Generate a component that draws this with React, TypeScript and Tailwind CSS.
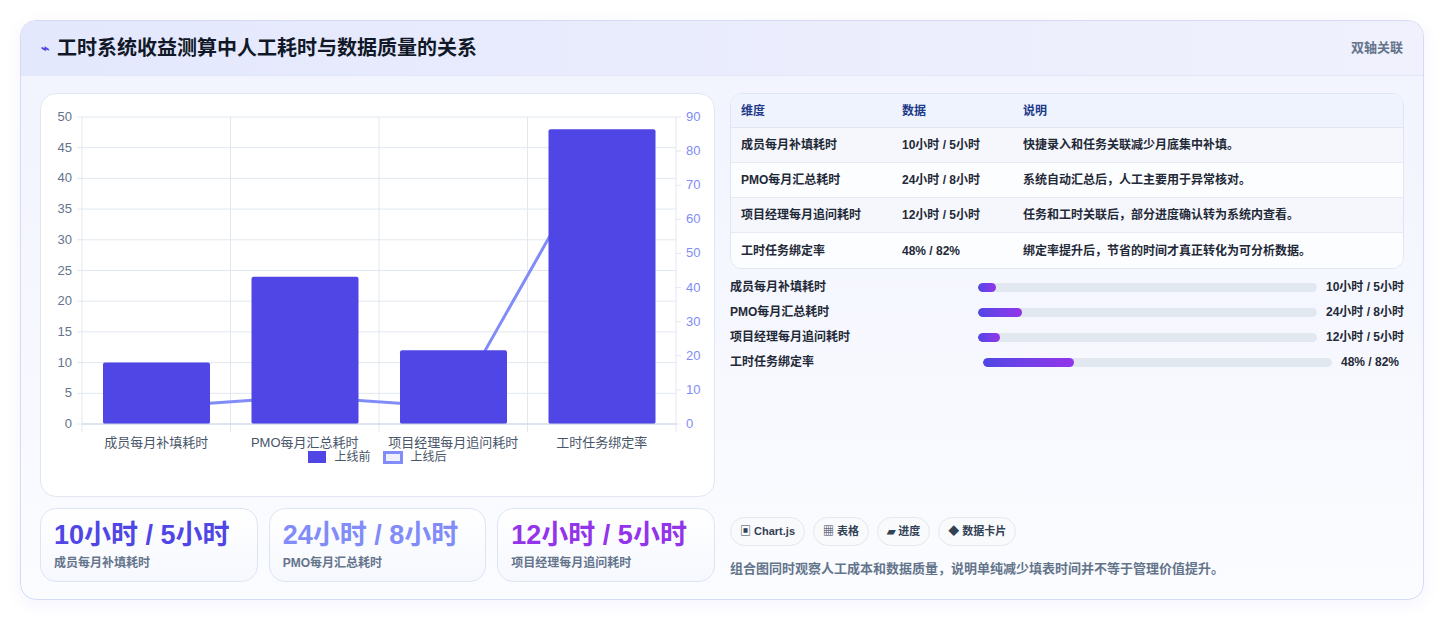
import React from "react";

const cats = ["成员每月补填耗时", "PMO每月汇总耗时", "项目经理每月追问耗时", "工时任务绑定率"];
const before = [10, 24, 12, 48];
const after = [5, 8, 5, 82];

function Chart() {
  const L = 41, R = 635, T = 23, B = 330;
  const cw = (R - L) / 4;
  const yl = (v: number) => B - (v / 50) * (B - T);
  const yr = (v: number) => B - (v / 90) * (B - T);
  const pts = after.map((v, i) => `${L + cw * i + cw / 2},${yr(v)}`).join(" ");
  return (
    <svg width="675" height="355" className="block" style={{ fontFamily: '"Liberation Sans","Noto Sans CJK SC",sans-serif' }}>
      {[0, 5, 10, 15, 20, 25, 30, 35, 40, 45, 50].map((v) => (
        <g key={v}>
          <line x1={L - 5} x2={R} y1={yl(v)} y2={yl(v)} stroke="#e2e8f0" />
          <text x={L - 10} y={yl(v) + 4} fontSize="13" fill="#64748b" textAnchor="end">{v}</text>
        </g>
      ))}
      {[0, 10, 20, 30, 40, 50, 60, 70, 80, 90].map((v) => (
        <g key={v}>
          <line x1={R} x2={R + 5} y1={yr(v)} y2={yr(v)} stroke="#e2e8f0" />
          <text x={R + 10} y={yr(v) + 4} fontSize="13" fill="#818cf8">{v}</text>
        </g>
      ))}
      {[0, 1, 2, 3, 4].map((i) => (
        <line key={i} x1={L + cw * i} x2={L + cw * i} y1={T} y2={B + 8} stroke="#e2e8f0" />
      ))}
      <polyline points={pts} fill="none" stroke="#818cf8" strokeWidth="3" />
      {before.map((v, i) => (
        <rect key={i} x={L + cw * i + 21} y={yl(v)} width={107} height={B - yl(v)} fill="#4f46e5" rx="2" />
      ))}
      <line x1={L} x2={R} y1={B} y2={B} stroke="#cbd5e1" />
      {cats.map((c, i) => (
        <text key={c} x={L + cw * i + cw / 2} y={B + 23} fontSize="13" fill="#475569" textAnchor="middle">{c}</text>
      ))}
    </svg>
  );
}

const rows = [
  ["成员每月补填耗时", "10小时 / 5小时", "快捷录入和任务关联减少月底集中补填。"],
  ["PMO每月汇总耗时", "24小时 / 8小时", "系统自动汇总后，人工主要用于异常核对。"],
  ["项目经理每月追问耗时", "12小时 / 5小时", "任务和工时关联后，部分进度确认转为系统内查看。"],
  ["工时任务绑定率", "48% / 82%", "绑定率提升后，节省的时间才真正转化为可分析数据。"],
];
const bars = [5.3, 13, 6.5, 26];

export default function App() {
  return (
    <div className="w-[1444px] h-[620px] bg-white pt-5 px-5" style={{ fontFamily: '"Liberation Sans","Noto Sans CJK SC",sans-serif' }}>
      <div className="h-[580px] rounded-2xl border border-[#d6dbf5] overflow-hidden bg-gradient-to-b from-[#f1f3fe] to-[#fbfcff] shadow-[0_4px_16px_rgba(99,102,241,0.08)] flex flex-col">
        <div className="h-[55px] shrink-0 flex items-center justify-between px-5 bg-gradient-to-r from-[#e4e8fd] to-[#f0f1fd] border-b border-[#e3e6f6]">
          <div className="flex items-center gap-2">
            <span className="text-[#4f46e5] text-sm font-bold">⌁</span>
            <span className="text-[20px] font-bold text-[#111827]">工时系统收益测算中人工耗时与数据质量的关系</span>
          </div>
          <span className="text-[13px] font-bold text-[#64748b]">双轴关联</span>
        </div>
        <div className="flex-1 flex gap-[15px] px-[19px] pt-[17px] pb-[19px]">
          <div className="w-[675px] flex flex-col gap-[11px]">
            <div className="h-[404px] rounded-2xl border border-[#e0e6f2] bg-white pt-[0px]">
              <Chart />
              <div className="flex justify-center items-center gap-2 text-[12px] text-[#475569] -mt-[1px]">
                <span className="w-[18px] h-[12px] bg-[#4f46e5]" />
                <span>上线前</span>
                <span className="w-[20px] h-[13px] border-[3px] border-[#818cf8] bg-[#eef0fd] ml-1" />
                <span>上线后</span>
              </div>
            </div>
            <div className="grid grid-cols-3 gap-[11px]">
              {[
                ["10小时 / 5小时", "成员每月补填耗时", "text-[#4f46e5]"],
                ["24小时 / 8小时", "PMO每月汇总耗时", "text-[#818cf8]"],
                ["12小时 / 5小时", "项目经理每月追问耗时", "text-[#9333ea]"],
              ].map(([v, l, c]) => (
                <div key={l} className="h-[74px] rounded-2xl border border-[#dde5f5] bg-gradient-to-b from-white to-[#f6f8fe] px-[13px] pt-[8px]">
                  <div className={`text-[27px] font-bold leading-[36px] ${c}`}>{v}</div>
                  <div className="text-[12px] font-bold text-[#64748b] mt-[1px]">{l}</div>
                </div>
              ))}
            </div>
          </div>
          <div className="flex-1 flex flex-col">
            <div className="rounded-xl border border-[#dfe5f2] overflow-hidden bg-white">
              <div className="grid grid-cols-[161px_121px_1fr] h-[34px] items-center px-[10px] bg-[#eef3fe] border-b border-[#dfe5f2] text-[12px] font-bold text-[#1e3a8a]">
                <span>维度</span><span>数据</span><span>说明</span>
              </div>
              {rows.map((r, i) => (
                <div key={i} className={`grid grid-cols-[161px_121px_1fr] h-[35px] items-center px-[10px] text-[12px] font-bold text-[#1f2937] ${i < 3 ? "border-b border-[#e5eaf3]" : ""} ${i % 2 === 0 ? "bg-[#f5f7fc]" : "bg-[#fcfdff]"}`}>
                  <span>{r[0]}</span><span>{r[1]}</span><span>{r[2]}</span>
                </div>
              ))}
            </div>
            <div className="flex flex-col gap-[11px] mt-[11px]">
              {rows.map((r, i) => (
                <div key={i} className="flex items-center h-[14px] text-[12px] font-bold text-[#1f2937]">
                  <span className={i === 3 ? "w-[253px]" : "w-[248px]"}>{r[0]}</span>
                  <div className="flex-1 h-[9px] rounded-full bg-[#e2e8f0] overflow-hidden">
                    <div className="h-full rounded-full bg-gradient-to-r from-[#4f46e5] to-[#9333ea]" style={{ width: `${bars[i]}%` }} />
                  </div>
                  <span className={i === 3 ? "ml-[9px] w-[63px]" : "ml-[9px]"}>{r[1]}</span>
                </div>
              ))}
            </div>
            <div className="flex-1" />
            <div className="flex gap-2">
              {["▣ Chart.js", "▦ 表格", "▰ 进度", "◆ 数据卡片"].map((t) => (
                <span key={t} className="h-[29px] px-[9px] rounded-full border border-[#e2e8f0] bg-[#f8fafc] text-[11px] font-bold text-[#334155] flex items-center">{t}</span>
              ))}
            </div>
            <div className="text-[13px] font-bold text-[#64748b] mt-[13px] mb-[4px]">组合图同时观察人工成本和数据质量，说明单纯减少填表时间并不等于管理价值提升。</div>
          </div>
        </div>
      </div>
    </div>
  );
}
